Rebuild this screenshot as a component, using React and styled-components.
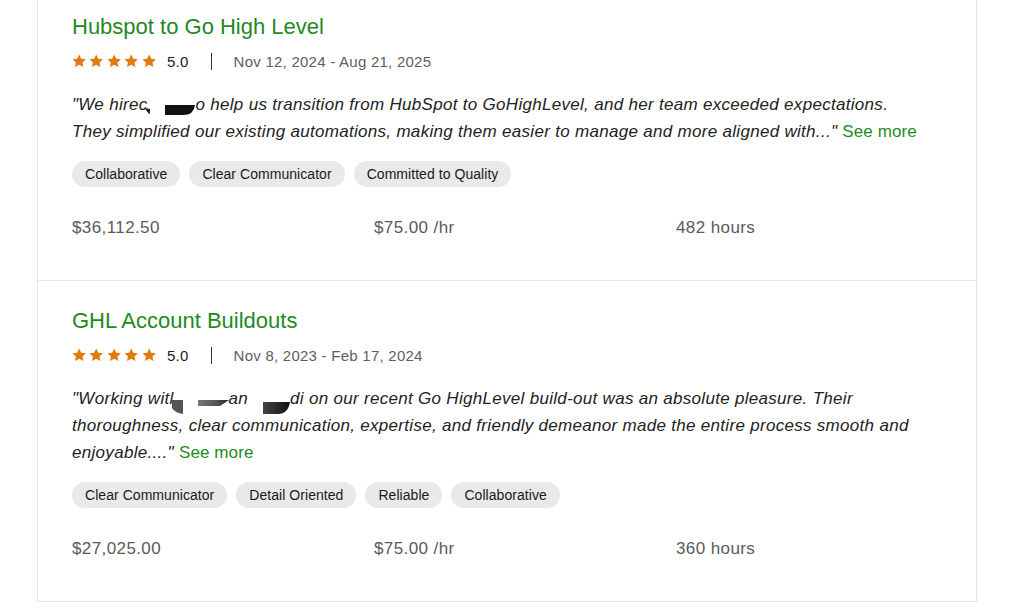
import React from "react";
import styled, { createGlobalStyle } from "styled-components";

const Global = createGlobalStyle`
  html, body { margin: 0; padding: 0; background: #fff; }
  body { font-family: "Liberation Sans", Arial, sans-serif; color: #222; overflow: hidden; }
`;

const Page = styled.div`
  width: 1024px;
  height: 610px;
  overflow: hidden;
`;

const Card = styled.div`
  margin: -13px 0 0 37px;
  width: 940px;
  box-sizing: border-box;
  border-left: 1px solid #e6e6e6;
  border-right: 1px solid #e6e6e6;
`;

const Section = styled.section`
  padding: 26px 34px 40px;
  border-bottom: 1px solid #e6e6e6;
`;

const Title = styled.h3`
  margin: 0;
  font-size: 22px;
  line-height: 28px;
  font-weight: 400;
  color: #1f8a1e;
`;

const Meta = styled.div`
  margin-top: 10px;
  display: flex;
  align-items: center;
  height: 20px;
  font-size: 15px;
  letter-spacing: 0.25px;
`;

const Stars = styled.div`
  display: flex;
  gap: 3px;
`;

const Score = styled.span`
  margin-left: 11px;
  color: #222;
`;

const Divider = styled.span`
  width: 1px;
  height: 17px;
  background: #333;
  margin: 0 22px;
`;

const Dates = styled.span`
  color: #5e5e5e;
`;

const Quote = styled.p`
  margin: 20px 0 0;
  max-width: 856px;
  font-size: 17px;
  line-height: 27px;
  font-style: italic;
  letter-spacing: 0.3px;
  color: #222;
`;

const SeeMore = styled.a`
  font-style: normal;
  letter-spacing: 0.1px;
  color: #1f8a1e;
  text-decoration: none;
`;

const Redact = styled.span`
  display: inline-block;
  width: ${(p) => p.$w}px;
  height: 16px;
  vertical-align: -6px;
  svg { display: block; overflow: visible; }
`;

const Chips = styled.div`
  margin-top: 16px;
  display: flex;
  gap: 9px;
`;

const Chip = styled.span`
  height: 26px;
  line-height: 26px;
  padding: 0 13px;
  border-radius: 13px;
  background: #e9e9e9;
  color: #1a1a1a;
  font-size: 14px;
  letter-spacing: 0.05px;
`;

const Stats = styled.div`
  margin-top: 29px;
  display: grid;
  grid-template-columns: repeat(3, 302px);
  font-size: 17px;
  line-height: 24px;
  letter-spacing: 0.4px;
  color: #5a5a5a;
`;

const Star = () => (
  <svg width="14.4" height="14" viewBox="0 0 24 23">
    <path
      fill="#e27b0f"
      d="M12 0.6l3.4 7 7.7 1-5.6 5.3 1.5 7.6L12 17.8l-7 3.7 1.5-7.6L0.9 8.6l7.7-1z"
    />
  </svg>
);

const Rating = ({ dates }) => (
  <Meta>
    <Stars>
      {[0, 1, 2, 3, 4].map((i) => (
        <Star key={i} />
      ))}
    </Stars>
    <Score>5.0</Score>
    <Divider />
    <Dates>{dates}</Dates>
  </Meta>
);

const Blob1 = () => (
  <Redact $w={48}>
    <svg width="48" height="16">
      <path d="M-3 8 Q-1 13 2 14 L2 9 Z" fill="#222" />
      <path d="M17 5 H47 Q46 15 35 15 H17 Z" fill="#111" />
    </svg>
  </Redact>
);

const Blob2a = () => (
  <Redact $w={55}>
    <svg width="55" height="16">
      <defs>
        <linearGradient id="g2" x1="0" x2="1">
          <stop offset="0" stopColor="#777" />
          <stop offset="0.6" stopColor="#555" />
          <stop offset="1" stopColor="#222" />
        </linearGradient>
      </defs>
      <path d="M-2 6 H9 V20 Q1 19 -2 14 Z" fill="#555" />
      <path d="M24 6 H55 L46 12 H24 Z" fill="url(#g2)" />
    </svg>
  </Redact>
);

const Blob2b = () => (
  <Redact $w={42}>
    <svg width="42" height="16">
      <defs>
        <linearGradient id="g3" x1="0" x2="1">
          <stop offset="0" stopColor="#444" />
          <stop offset="1" stopColor="#111" />
        </linearGradient>
      </defs>
      <path d="M15 8 H42 Q40 20 30 20 H15 Z" fill="url(#g3)" />
    </svg>
  </Redact>
);

const reviews = [
  {
    title: "Hubspot to Go High Level",
    dates: "Nov 12, 2024 - Aug 21, 2025",
    quote: (
      <>
        "We hirec
        <Blob1 />o help us transition from HubSpot to GoHighLevel, and her team
        exceeded expectations. They simplified our existing automations, making
        them easier to manage and more aligned with..."{" "}
      </>
    ),
    tags: ["Collaborative", "Clear Communicator", "Committed to Quality"],
    stats: ["$36,112.50", "$75.00 /hr", "482 hours"],
  },
  {
    title: "GHL Account Buildouts",
    dates: "Nov 8, 2023 - Feb 17, 2024",
    quote: (
      <>
        "Working witl
        <Blob2a />
        an
        <Blob2b />
        di on our recent Go HighLevel build-out was an absolute pleasure. Their
        thoroughness, clear communication, expertise, and friendly demeanor made
        the entire process smooth and enjoyable...."{" "}
      </>
    ),
    tags: ["Clear Communicator", "Detail Oriented", "Reliable", "Collaborative"],
    stats: ["$27,025.00", "$75.00 /hr", "360 hours"],
  },
];

export default function App() {
  return (
    <Page>
      <Global />
      <Card>
        {reviews.map((r) => (
          <Section key={r.title}>
            <Title>{r.title}</Title>
            <Rating dates={r.dates} />
            <Quote>
              {r.quote}
              <SeeMore href="#">See more</SeeMore>
            </Quote>
            <Chips>
              {r.tags.map((t) => (
                <Chip key={t}>{t}</Chip>
              ))}
            </Chips>
            <Stats>
              {r.stats.map((s) => (
                <span key={s}>{s}</span>
              ))}
            </Stats>
          </Section>
        ))}
      </Card>
    </Page>
  );
}
